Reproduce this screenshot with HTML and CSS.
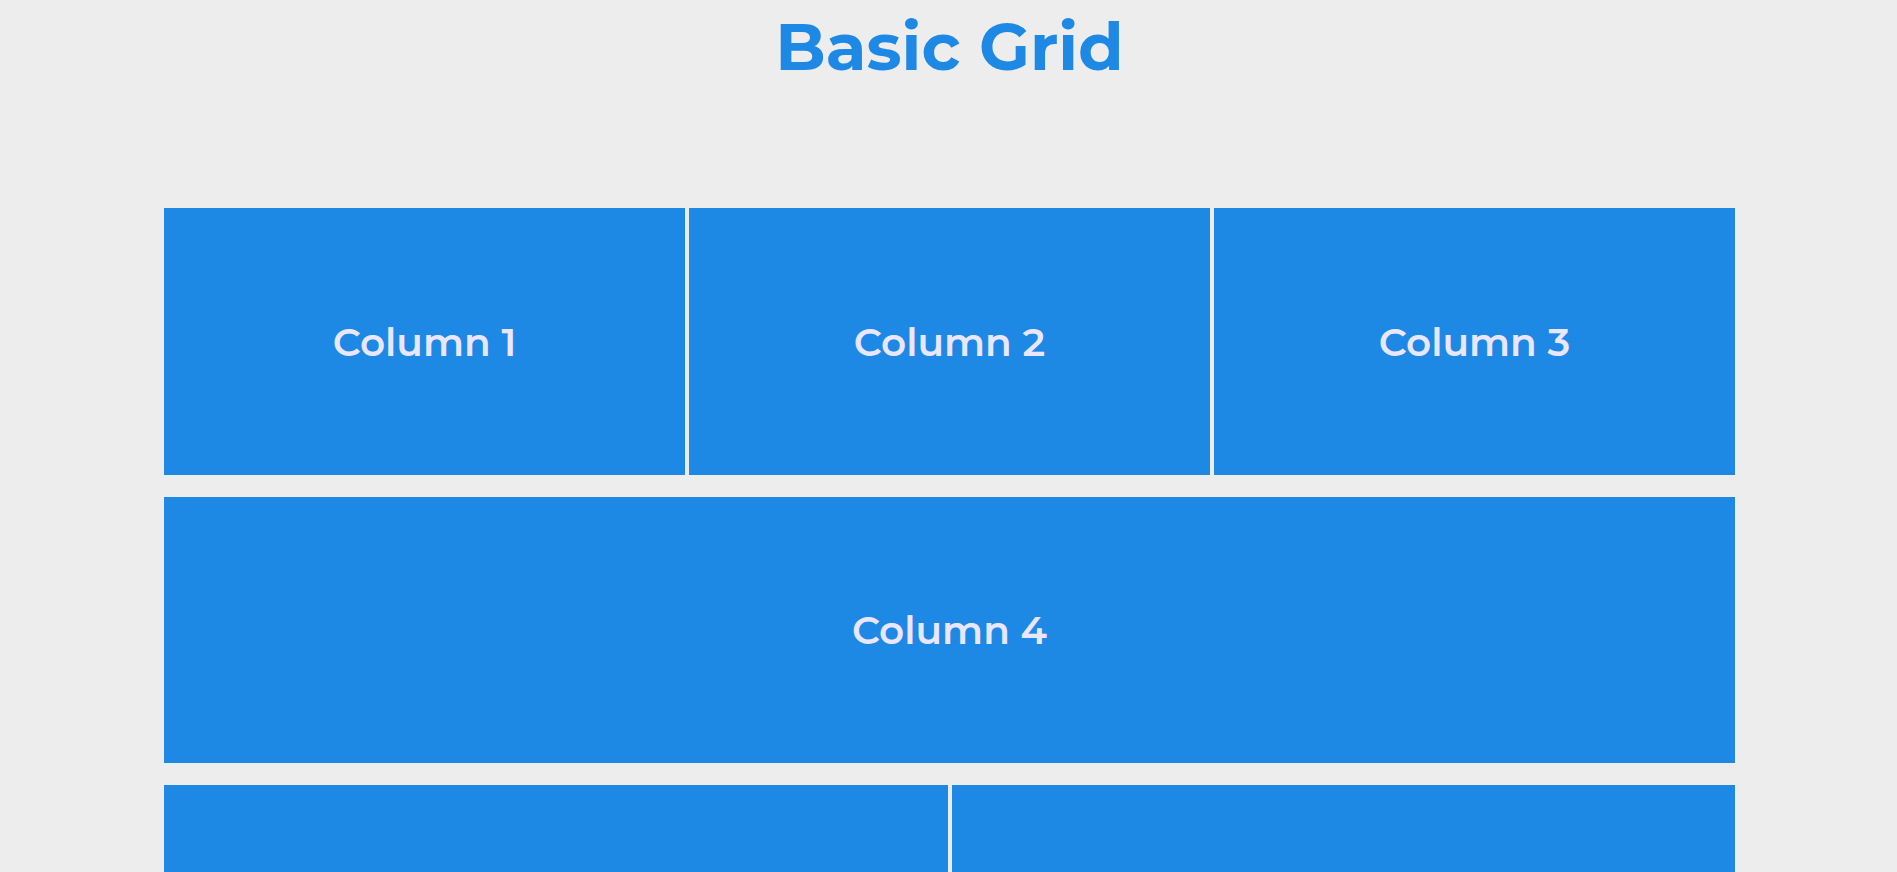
FILE: index.html
```html
<!DOCTYPE html>
<html lang="en">
<head>
<meta charset="utf-8">
<title>Basic Grid</title>
<link rel="stylesheet" href="styles.css">
</head>
<body>
<h1 class="title">Basic Grid</h1>
<main class="grid">
  <section class="cell cell-third">Column 1</section>
  <section class="cell cell-third">Column 2</section>
  <section class="cell cell-third">Column 3</section>
  <section class="cell cell-full">Column 4</section>
  <section class="cell cell-half"></section>
  <section class="cell cell-half"></section>
</main>
</body>
</html>
```

FILE: styles.css
```css
* {
  box-sizing: border-box;
}

body {
  margin: 0;
  background: #ededed;
  font-family: Montserrat, Inter, sans-serif;
}

.title {
  margin: 0;
  padding: 7px 0 121px 2px;
  color: #1e88e5;
  font-size: 66px;
  font-weight: 700;
  line-height: 80px;
  text-align: center;
}

.grid {
  display: grid;
  grid-template-columns: repeat(6, 1fr);
  grid-template-rows: 267px 266px 266px;
  gap: 22px 4px;
  padding: 0 162px 0 164px;
}

.cell {
  display: flex;
  align-items: center;
  justify-content: center;
  background: #1e88e5;
  color: #ebe6ff;
  font-size: 39px;
  font-weight: 600;
  line-height: 48px;
}

.cell-third {
  grid-column: span 2;
}

.cell-full {
  grid-column: 1 / -1;
}

.cell-half {
  grid-column: span 3;
}
```
